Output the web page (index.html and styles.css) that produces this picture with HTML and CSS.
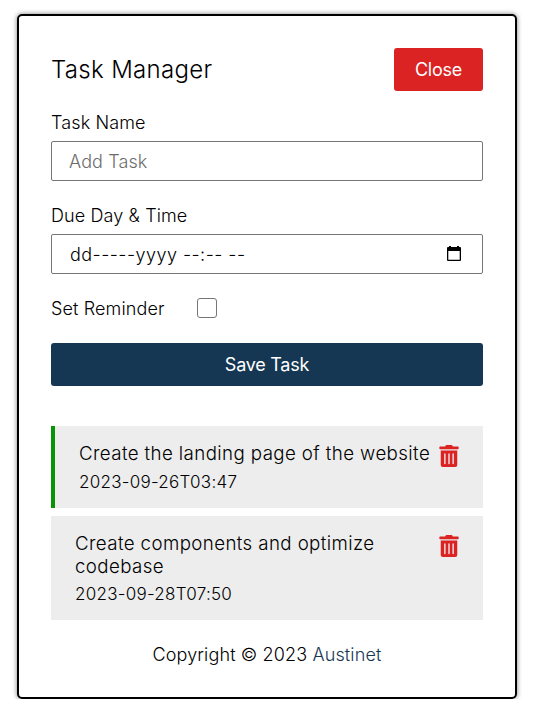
FILE: index.html
```html
<!DOCTYPE html>
<html lang="en">
<head>
<meta charset="utf-8">
<title>Task Manager</title>
<link rel="stylesheet" href="styles.css">
</head>
<body>
<svg class="sprite" aria-hidden="true">
  <symbol id="trash" viewBox="0 0 448 512"><path d="M32 464a48 48 0 0 0 48 48h288a48 48 0 0 0 48-48V128H32zm272-256a16 16 0 0 1 32 0v224a16 16 0 0 1-32 0zm-96 0a16 16 0 0 1 32 0v224a16 16 0 0 1-32 0zm-96 0a16 16 0 0 1 32 0v224a16 16 0 0 1-32 0zM432 32H312l-9.4-18.7A24 24 0 0 0 281.1 0H166.8a23.72 23.72 0 0 0-21.4 13.3L136 32H16A16 16 0 0 0 0 48v32a16 16 0 0 0 16 16h416a16 16 0 0 0 16-16V48a16 16 0 0 0-16-16z"/></symbol>
</svg>
<main class="card">
  <header class="header">
    <h1 class="title">Task Manager</h1>
    <button class="btn btn-close" type="button">Close</button>
  </header>
  <form class="form">
    <div class="field">
      <label class="label" for="name">Task Name</label>
      <input class="control" id="name" type="text" placeholder="Add Task">
    </div>
    <div class="field">
      <span class="label">Due Day &amp; Time</span>
      <div class="control date">
        <span class="date-text">dd-----yyyy --:-- --</span>
        <svg class="calendar" viewBox="0 0 14 16"><path fill-rule="evenodd" d="M2 0h2v1h6V0h2v1h1a1 1 0 0 1 1 1v12a1 1 0 0 1-1 1H1a1 1 0 0 1-1-1V2a1 1 0 0 1 1-1h1zM1.3 5v8.7h11.4V5z"/></svg>
      </div>
    </div>
    <div class="reminder">
      <label class="label" for="reminder">Set Reminder</label>
      <input class="check" id="reminder" type="checkbox">
    </div>
    <button class="btn btn-save" type="button">Save Task</button>
  </form>
  <section class="tasks">
    <article class="task task-reminder">
      <div class="task-head">
        <h2 class="task-name">Create the landing page of the website</h2>
        <svg class="trash"><use href="#trash"/></svg>
      </div>
      <p class="task-date">2023-09-26T03:47</p>
    </article>
    <article class="task">
      <div class="task-head">
        <h2 class="task-name">Create components and optimize codebase</h2>
        <svg class="trash"><use href="#trash"/></svg>
      </div>
      <p class="task-date">2023-09-28T07:50</p>
    </article>
  </section>
  <footer class="footer">Copyright © 2023 <a class="link" href="#">Austinet</a></footer>
</main>
</body>
</html>
```
FILE: styles.css
```css
* { box-sizing: border-box; margin: 0; padding: 0; }
body {
  background: #fff;
  color: #000;
  font-family: Inter, "Liberation Sans", sans-serif;
  font-size: 18px;
  font-weight: 300;
  letter-spacing: 0.12px;
}
.sprite { display: none; }
.card {
  width: 500px;
  height: 685px;
  margin: 14px 0 0 17px;
  padding: 32px;
  border: 2px solid #000;
  border-radius: 5px;
  box-shadow: 0 0 5px rgba(0, 0, 0, 0.5);
}
.header { display: flex; align-items: center; justify-content: space-between; height: 43px; }
.title { font-size: 24px; font-weight: 300; line-height: 30px; letter-spacing: 0.33px; }
.btn {
  height: 43px;
  border: 0;
  border-radius: 3px;
  color: #fff;
  font: 420 18px/23px Inter, "Liberation Sans", sans-serif;
  letter-spacing: -0.25px;
}
.btn-close { width: 89px; background: #db2323; }
.btn-save { width: 432px; background: #163753; }
.form { display: flex; flex-direction: column; padding-top: 20px; }
.field { margin-bottom: 23px; }
.label { display: block; line-height: 24px; }
.control {
  display: block;
  width: 432px;
  height: 40px;
  margin-top: 6px;
  padding: 0 17px;
  border: 1px solid #767676;
  border-radius: 2px;
  background: #fff;
  font: 300 18px/38px Inter, "Liberation Sans", sans-serif;
  letter-spacing: 0.1px;
}
.control::placeholder { color: #6c6c6c; }
.date { display: flex; align-items: center; justify-content: space-between; padding: 0 18px; letter-spacing: 0.45px; }
.date-text { padding-top: 1px; }
.calendar { width: 14px; height: 16px; margin-right: 3px; }
.reminder { display: flex; align-items: center; gap: 32.5px; height: 23px; margin-bottom: 23px; }
.check {
  width: 20px;
  height: 20px;
  margin-top: -1px;
  appearance: none;
  border: 1px solid #767676;
  border-radius: 3px;
}
.tasks { display: flex; flex-direction: column; gap: 8px; margin-top: 40px; }
.task { padding: 16px 24px; background: #ededed; }
.task-reminder { border-left: 4px solid #089408; }
.task-head { display: flex; align-items: flex-start; justify-content: space-between; }
.task-name { font-size: 18.7px; font-weight: 300; line-height: 23px; letter-spacing: 0.4px; }
.trash { flex: none; width: 20px; height: 22px; margin: 3px 0 -1px; fill: #db2323; }
.task-date { margin-top: 6px; font-size: 17px; line-height: 20px; letter-spacing: 0.27px; }
.footer { margin-top: 24px; text-align: center; line-height: 22px; letter-spacing: 0.13px; }
.link { color: #163753; text-decoration: none; }
```
